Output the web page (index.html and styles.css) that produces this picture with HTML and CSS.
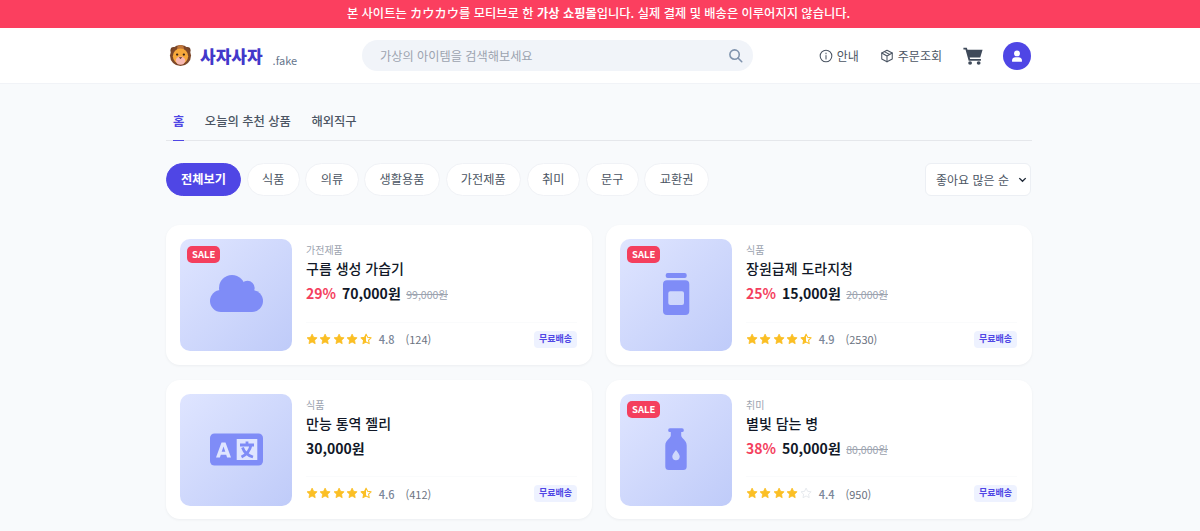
FILE: index.html
```html
<!DOCTYPE html>
<html lang="ko">
<head>
<meta charset="utf-8">
<title>사자사자</title>
<link rel="stylesheet" href="styles.css">
</head>
<body>
<svg class="defs" width="0" height="0" aria-hidden="true">
  <defs>
    <path id="star-shape" d="M12 2.200l3 6.300 6.900.9-5 4.800 1.200 6.800-6.100-3.300L5.900 21l1.200-6.800-5-4.800 6.900-.9z"/>
    <linearGradient id="half-fill"><stop offset="50%" stop-color="#fbbf24"/><stop offset="50%" stop-color="#fff"/></linearGradient>
    <symbol id="star" viewBox="0 0 24 24"><use href="#star-shape" fill="#fbbf24" stroke="#fbbf24" stroke-width="1.500" stroke-linejoin="round"/></symbol>
    <symbol id="star-half" viewBox="0 0 24 24"><use href="#star-shape" fill="url(#half-fill)" stroke="#fbbf24" stroke-width="2" stroke-linejoin="round"/></symbol>
    <symbol id="star-empty" viewBox="0 0 24 24"><use href="#star-shape" fill="#fff" stroke="#e2e5ea" stroke-width="1.600" stroke-linejoin="round"/></symbol>
  </defs>
</svg>
<div class="banner">본 사이트는 カウカウ를 모티브로 한 <b>가상 쇼핑몰</b>입니다. 실제 결제 및 배송은 이루어지지 않습니다.</div>
<header class="header">
  <div class="header-inner">
    <a class="logo">
      <svg class="logo-icon" viewBox="0 0 24 24">
        <circle cx="5" cy="6.500" r="3.500" fill="#6f4028"/>
        <circle cx="19" cy="6.500" r="3.500" fill="#6f4028"/>
        <circle cx="12" cy="12" r="11" fill="#7d4829"/>
        <circle cx="12" cy="4.500" r="3.500" fill="#c0763a"/>
        <circle cx="12" cy="12.800" r="8" fill="#f7a93b"/>
        <circle cx="8.500" cy="11" r="1.200" fill="#3a2418"/>
        <circle cx="15.500" cy="11" r="1.200" fill="#3a2418"/>
        <ellipse cx="12" cy="17.300" rx="5" ry="4.300" fill="#f7b8b0"/>
        <path d="M10.200 13.800h3.600L12 15.600z" fill="#5a2d1d"/>
      </svg>
      <span class="logo-name">사자사자</span>
      <span class="logo-sub">.fake</span>
    </a>
    <div class="search">
      <span class="search-text">가상의 아이템을 검색해보세요</span>
      <svg class="search-icon" viewBox="0 0 24 24"><circle cx="10.500" cy="10.500" r="7.500"/><path d="M16 16l6 6"/></svg>
    </div>
    <nav class="actions">
      <a class="action">
        <svg class="action-icon" viewBox="0 0 24 24"><circle cx="12" cy="12" r="10"/><path d="M12 11v6M12 7v1"/></svg>안내
      </a>
      <a class="action">
        <svg class="action-icon" viewBox="0 0 24 24"><path d="M12 2l9 5v10l-9 5-9-5V7z"/><path d="M3 7l9 5 9-5M12 12v10M7.500 4.500l9 5"/></svg>주문조회
      </a>
      <svg class="cart" viewBox="0 0 24 24" preserveAspectRatio="none"><path d="M.5 1h4.100l.8 2.500H23.500l-2.800 10.500H8l.5 2H21.500v2.200H6.800L3 3.200H.5z"/><circle cx="8.500" cy="21.300" r="2.300"/><circle cx="18.800" cy="21.300" r="2.300"/></svg>
      <span class="avatar">
        <svg viewBox="0 0 24 24"><circle cx="12" cy="7.500" r="5"/><path d="M3.500 21v-1.500c0-3.500 3-5.500 5.500-5.500h6c2.500 0 5.500 2 5.500 5.500V21a1 1 0 0 1-1 1h-15a1 1 0 0 1-1-1z"/></svg>
      </span>
    </nav>
  </div>
</header>
<main class="main">
  <nav class="tabs">
    <a class="tab tab-active">홈</a>
    <a class="tab">오늘의 추천 상품</a>
    <a class="tab">해외직구</a>
  </nav>
  <div class="filter-row">
    <div class="chips">
      <span class="chip chip-active">전체보기</span>
      <span class="chip">식품</span>
      <span class="chip">의류</span>
      <span class="chip">생활용품</span>
      <span class="chip">가전제품</span>
      <span class="chip">취미</span>
      <span class="chip">문구</span>
      <span class="chip">교환권</span>
    </div>
    <div class="sort">좋아요 많은 순
      <svg class="sort-arrow" viewBox="0 0 12 12"><path d="M2.500 4.500L6 8l3.500-3.500"/></svg>
    </div>
  </div>
  <section class="grid">
    <article class="card">
      <div class="thumb">
        <span class="sale">SALE</span>
        <svg class="thumb-icon" viewBox="0 0 54 54"><circle cx="23" cy="20" r="13"/><circle cx="38.500" cy="20" r="7.200"/><circle cx="12" cy="33" r="11"/><circle cx="43" cy="33" r="11"/><rect x="12" y="22" width="31" height="22"/></svg>
      </div>
      <div class="info">
        <div class="category">가전제품</div>
        <h3 class="title">구름 생성 가습기</h3>
        <div class="price-row"><span class="discount">29%</span><span class="price">70,000원</span><span class="old-price">99,000원</span></div>
        <div class="meta">
          <span class="stars"><svg><use href="#star"/></svg><svg><use href="#star"/></svg><svg><use href="#star"/></svg><svg><use href="#star"/></svg><svg><use href="#star-half"/></svg></span>
          <span class="rating">4.8</span><span class="reviews">(124)</span>
          <span class="ship">무료배송</span>
        </div>
      </div>
    </article>
    <article class="card">
      <div class="thumb">
        <span class="sale">SALE</span>
        <svg class="thumb-icon" viewBox="0 0 54 54"><rect x="16.700" y="5" width="21" height="5" rx="2"/><path fill-rule="evenodd" d="M18 12.300h18.300a4 4 0 0 1 4 4V43a4 4 0 0 1-4 4H18a4 4 0 0 1-4-4V16.300a4 4 0 0 1 4-4zm3.300 11a2 2 0 0 0-2 2V35a2 2 0 0 0 2 2H33a2 2 0 0 0 2-2v-9.700a2 2 0 0 0-2-2z"/></svg>
      </div>
      <div class="info">
        <div class="category">식품</div>
        <h3 class="title">장원급제 도라지청</h3>
        <div class="price-row"><span class="discount">25%</span><span class="price">15,000원</span><span class="old-price">20,000원</span></div>
        <div class="meta">
          <span class="stars"><svg><use href="#star"/></svg><svg><use href="#star"/></svg><svg><use href="#star"/></svg><svg><use href="#star"/></svg><svg><use href="#star-half"/></svg></span>
          <span class="rating">4.9</span><span class="reviews">(2530)</span>
          <span class="ship">무료배송</span>
        </div>
      </div>
    </article>
    <article class="card">
      <div class="thumb">
        <svg class="thumb-icon" viewBox="0 0 54 54"><rect x="1" y="10.500" width="53" height="32" rx="4.500"/><rect class="icon-cut" x="27.700" y="16" width="20.600" height="21"/><path class="icon-cut" d="M7 34.500L12.500 19.500h4L22 34.500h-3.900l-.9-2.800h-5.400l-.9 2.800zm5.700-5.700h3.600l-1.800-5.300z"/><path class="icon-line" d="M31 22h14M38 18.500V22M42 22c-1 5.500-4.500 9.500-9.500 12M33.500 24.500c1.500 4.500 5.500 8 10.500 9.500"/></svg>
      </div>
      <div class="info">
        <div class="category">식품</div>
        <h3 class="title">만능 통역 젤리</h3>
        <div class="price-row"><span class="price">30,000원</span></div>
        <div class="meta">
          <span class="stars"><svg><use href="#star"/></svg><svg><use href="#star"/></svg><svg><use href="#star"/></svg><svg><use href="#star"/></svg><svg><use href="#star-half"/></svg></span>
          <span class="rating">4.6</span><span class="reviews">(412)</span>
          <span class="ship">무료배송</span>
        </div>
      </div>
    </article>
    <article class="card">
      <div class="thumb">
        <span class="sale">SALE</span>
        <svg class="thumb-icon" viewBox="0 0 54 54"><path fill-rule="evenodd" d="M21 5.300h12a1.800 1.800 0 0 1 0 3.700h-.8v3.500c0 3 5.500 4.500 5.500 10V43.500a3.500 3.500 0 0 1-3.500 3.500H19.800a3.500 3.500 0 0 1-3.500-3.500V22.500c0-5.500 5.500-7 5.500-10V9H21a1.800 1.800 0 0 1 0-3.700zm6 21.700c-2.300 3-3.700 4.800-3.700 6.500a3.700 3.700 0 0 0 7.400 0c0-1.700-1.400-3.500-3.700-6.500z"/></svg>
      </div>
      <div class="info">
        <div class="category">취미</div>
        <h3 class="title">별빛 담는 병</h3>
        <div class="price-row"><span class="discount">38%</span><span class="price">50,000원</span><span class="old-price">80,000원</span></div>
        <div class="meta">
          <span class="stars"><svg><use href="#star"/></svg><svg><use href="#star"/></svg><svg><use href="#star"/></svg><svg><use href="#star"/></svg><svg><use href="#star-empty"/></svg></span>
          <span class="rating">4.4</span><span class="reviews">(950)</span>
          <span class="ship">무료배송</span>
        </div>
      </div>
    </article>
  </section>
</main>
</body>
</html>
```

FILE: styles.css
```css
* { box-sizing: border-box; }
html, body { height: 531px; overflow: hidden; }
body {
  margin: 0;
  background: #f8fafc;
  color: #111827;
  font-family: "Noto Sans CJK KR", "Noto Sans", sans-serif;
}
.defs { position: absolute; }
.banner {
  height: 28px;
  padding-right: 3px;
  background: #fb3f5f;
  color: #fff;
  font-size: 12.250px;
  font-weight: 500;
  line-height: 27px;
  text-align: center;
}
.banner b { font-weight: 700; }
.header {
  height: 56px;
  background: #fff;
  border-bottom: 1px solid #f1f3f7;
}
.header-inner {
  width: 865px;
  height: 55px;
  margin-left: 166px;
  display: flex;
  align-items: center;
  padding-left: 3px;
}
.logo { display: flex; align-items: center; width: 193px; }
.logo-icon { width: 23px; height: 23px; }
.logo-name {
  margin-left: 8px;
  font-size: 17px;
  font-weight: 900;
  color: #4338ca;
}
.logo-sub {
  margin: 9px 0 0 10px;
  font-size: 11px;
  color: #64748b;
}
.search {
  width: 391px;
  height: 31px;
  background: #f1f4f9;
  border-radius: 16px;
  display: flex;
  align-items: center;
  justify-content: space-between;
  padding: 0 10px 0 18px;
}
.search-text { font-size: 12.200px; color: #9ca3af; }
.search-icon {
  width: 15px;
  height: 15px;
  fill: none;
  stroke: #7f93ad;
  stroke-width: 2.500;
  stroke-linecap: round;
}
.actions {
  margin-left: auto;
  display: flex;
  align-items: center;
}
.action {
  display: flex;
  align-items: center;
  gap: 4px;
  font-size: 12px;
  color: #4b5563;
  margin-right: 21px;
}
.action-icon {
  width: 14px;
  height: 14px;
  fill: none;
  stroke: #4b5563;
  stroke-width: 1.800;
  stroke-linejoin: round;
  stroke-linecap: round;
}
.cart { width: 20px; height: 18px; fill: #3f4a5a; margin-right: 20px; }
.avatar {
  width: 28px;
  height: 28px;
  border-radius: 50%;
  background: #4f46e5;
  display: flex;
  align-items: center;
  justify-content: center;
}
.avatar svg { width: 14px; height: 14px; fill: #fff; }
.main { width: 866px; margin-left: 166px; }
.tabs {
  height: 57px;
  padding: 21px 0 0 7px;
  display: flex;
  gap: 20.500px;
  border-bottom: 1px solid #e5e7eb;
}
.tab {
  height: 36px;
  font-size: 12.300px;
  font-weight: 500;
  line-height: 33px;
  color: #4b5563;
}
.tab-active {
  color: #4f46e5;
  font-weight: 700;
  border-bottom: 1px solid #4f46e5;
}
.filter-row {
  display: flex;
  justify-content: space-between;
  margin-top: 22px;
}
.chips { display: flex; gap: 5.800px; }
.chip {
  height: 33px;
  padding: 0 14.300px;
  background: #fff;
  border: 1px solid #f0f2f6;
  border-radius: 17px;
  font-size: 12.200px;
  line-height: 30px;
  color: #4b5563;
}
.chip-active {
  padding: 0 14px;
  background: #4f46e5;
  border-color: #4f46e5;
  color: #fff;
  font-weight: 700;
}
.sort {
  width: 106px;
  height: 33px;
  margin-right: 1px;
  padding-left: 10px;
  background: #fff;
  border: 1px solid #eceff4;
  border-radius: 6px;
  font-size: 12px;
  line-height: 31px;
  color: #4b5563;
  position: relative;
}
.sort-arrow {
  position: absolute;
  right: 2px;
  top: 10px;
  width: 11px;
  height: 11px;
  fill: none;
  stroke: #1f2937;
  stroke-width: 1.500;
}
.grid {
  margin-top: 29px;
  display: grid;
  grid-template-columns: 426px 426px;
  gap: 15px 14px;
}
.card {
  height: 139.500px;
  padding: 14px;
  background: #fff;
  border-radius: 14px;
  box-shadow: 0 1px 3px rgba(15, 23, 42, 0.05);
  display: flex;
  gap: 14px;
}
.thumb {
  width: 112px;
  height: 112px;
  flex: none;
  border-radius: 10px;
  background: linear-gradient(135deg, #dfe5ff, #bfcbf9);
  display: flex;
  align-items: center;
  justify-content: center;
  position: relative;
}
.thumb-icon { width: 54px; height: 54px; fill: #7f8cf7; }
.icon-cut { fill: #dfe5ff; }
.icon-line { fill: none; stroke: #7f8cf7; stroke-width: 2.800; }
.sale {
  position: absolute;
  left: 7px;
  top: 7px;
  height: 17px;
  padding: 0 5px;
  background: #f43f5e;
  color: #fff;
  border-radius: 5px;
  font-size: 9.500px;
  font-weight: 700;
  line-height: 17px;
}
.info { flex: 1; display: flex; flex-direction: column; padding-right: 1px; }
.category {
  font-size: 10px;
  line-height: 14px;
  margin-top: 4px;
  color: #9ca3af;
}
.title {
  margin: 1px 0 0;
  font-size: 14px;
  font-weight: 500;
  line-height: 20px;
  color: #111827;
}
.price-row {
  display: flex;
  align-items: baseline;
  margin-top: 5px;
  height: 21px;
}
.discount { font-size: 14px; font-weight: 700; color: #f43f5e; margin-right: 6px; }
.price { font-size: 14px; font-weight: 700; color: #111827; }
.old-price {
  margin-left: 5.500px;
  font-size: 10.500px;
  color: #9ca3af;
  text-decoration: line-through;
}
.meta {
  margin-top: auto;
  height: 29px;
  border-top: 1px solid #fafbfc;
  display: flex;
  align-items: center;
  padding-top: 5px;
  font-size: 11px;
}
.stars { display: flex; gap: 1.300px; }
.stars svg { width: 12.200px; height: 12.200px; display: block; }
.rating { margin-left: 6.500px; color: #7b8698; font-weight: 500; }
.reviews { margin-left: 11px; color: #6b7280; }
.ship {
  margin-left: auto;
  height: 17px;
  padding: 0 5px;
  background: #eef2ff;
  color: #4f46e5;
  border-radius: 4px;
  font-size: 9px;
  font-weight: 700;
  line-height: 16px;
}
```
